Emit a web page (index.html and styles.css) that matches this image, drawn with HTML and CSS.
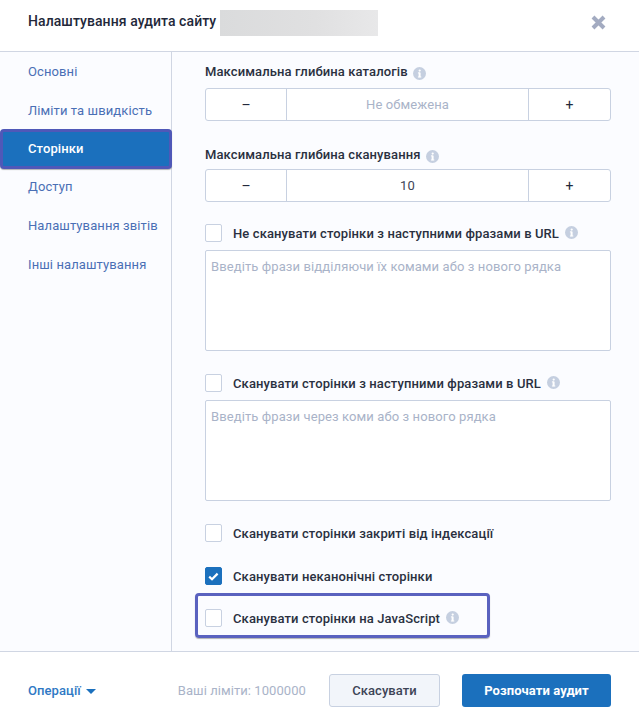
FILE: index.html
```html
<!DOCTYPE html>
<html lang="uk">
<head>
  <meta charset="UTF-8">
  <meta name="viewport" content="width=device-width, initial-scale=1.0">
  <title>Налаштування аудита сайту</title>
  <link rel="stylesheet" href="styles.css">
</head>
<body>
  <svg class="icon-defs" width="0" height="0">
    <symbol id="info" viewBox="0 0 13 13">
      <circle cx="6.5" cy="6.5" r="6.5" fill="#c5cfe0"/>
      <rect x="5.6" y="5.6" width="2" height="4.6" fill="#fff"/>
      <rect x="4.9" y="5.4" width="2" height="1" fill="#fff"/>
      <rect x="4.9" y="9.5" width="3.4" height="1" fill="#fff"/>
      <circle cx="6.7" cy="3.6" r="1.1" fill="#fff"/>
    </symbol>
  </svg>

  <div class="modal">
    <header class="modal-header">
      <h1 class="modal-title">Налаштування аудита сайту</h1>
      <div class="site-blur"></div>
      <svg class="close-icon" width="15" height="15" viewBox="0 0 15 15">
        <path d="M2 2 L13 13 M13 2 L2 13" stroke="#a3abc1" stroke-width="4" fill="none"/>
      </svg>
    </header>

    <div class="modal-body">
      <nav class="side-nav">
        <a class="nav-item">Основні</a>
        <a class="nav-item">Ліміти та швидкість</a>
        <a class="nav-item active">Сторінки</a>
        <a class="nav-item">Доступ</a>
        <a class="nav-item">Налаштування звітів</a>
        <a class="nav-item">Інші налаштування</a>
      </nav>

      <main class="settings">
        <div class="field-label first">Максимальна глибина каталогів <svg class="info"><use href="#info"/></svg></div>
        <div class="stepper">
          <div class="step-btn">–</div>
          <div class="step-value muted">Не обмежена</div>
          <div class="step-btn">+</div>
        </div>

        <div class="field-label second">Максимальна глибина сканування <svg class="info"><use href="#info"/></svg></div>
        <div class="stepper">
          <div class="step-btn">–</div>
          <div class="step-value">10</div>
          <div class="step-btn">+</div>
        </div>

        <label class="check-row url-row">
          <span class="checkbox"></span>
          <span>Не сканувати сторінки з наступними фразами в URL</span>
          <svg class="info"><use href="#info"/></svg>
        </label>
        <div class="phrase-box">Введіть фрази відділяючи їх комами або з нового рядка</div>

        <label class="check-row url-row second-url">
          <span class="checkbox"></span>
          <span>Сканувати сторінки з наступними фразами в URL</span>
          <svg class="info"><use href="#info"/></svg>
        </label>
        <div class="phrase-box">Введіть фрази через коми або з нового рядка</div>

        <label class="check-row closed-row">
          <span class="checkbox"></span>
          <span>Сканувати сторінки закриті від індексації</span>
        </label>

        <label class="check-row canon-row">
          <span class="checkbox checked">
            <svg width="11" height="9" viewBox="0 0 11 9"><path d="M1.2 4.6 L4 7.2 L9.6 1.6" stroke="#fff" stroke-width="2.2" fill="none"/></svg>
          </span>
          <span>Сканувати неканонічні сторінки</span>
        </label>

        <div class="highlight">
          <label class="check-row">
            <span class="checkbox"></span>
            <span>Сканувати сторінки на JavaScript</span>
            <svg class="info"><use href="#info"/></svg>
          </label>
        </div>
      </main>
    </div>

    <footer class="modal-footer">
      <a class="operations">Операції <span class="caret"></span></a>
      <span class="limits">Ваші ліміти: 1000000</span>
      <button class="btn btn-cancel">Скасувати</button>
      <button class="btn btn-start">Розпочати аудит</button>
    </footer>
  </div>
</body>
</html>
```

FILE: styles.css
```css
* {
  box-sizing: border-box;
}

html, body {
  margin: 0;
  padding: 0;
}

body {
  font-family: Roboto, "Liberation Sans", sans-serif;
  font-size: 13px;
  color: #2a3040;
  background-color: #fff;
}

.icon-defs {
  position: absolute;
}

.modal {
  width: 639px;
  height: 723px;
  display: flex;
  flex-direction: column;
  overflow: hidden;
}

/* Header */
.modal-header {
  height: 52px;
  flex: none;
  display: flex;
  align-items: center;
  padding: 0 33px 0 28px;
  border-bottom: 1px solid #d0d6e3;
  background-color: #fff;
}

.modal-title {
  margin: 0;
  font-size: 14px;
  font-weight: 500;
  line-height: 44px;
  height: 44px;
  margin-top: -9px;
  letter-spacing: 0.08px;
  color: #23283a;
}

.site-blur {
  width: 158px;
  height: 26px;
  margin-left: 4px;
  margin-top: -6px;
  background: linear-gradient(90deg, #dadbdc, #e0e0e1 60%, #e8e8e9);
}

.close-icon {
  margin-left: auto;
  margin-top: -6px;
}

/* Body */
.modal-body {
  height: 600px;
  flex: none;
  display: flex;
  background-color: #fbfcff;
  border-bottom: 1px solid #d0d6e3;
}

.side-nav {
  width: 172px;
  flex: none;
  border-right: 1px solid #d0d6e3;
  padding-top: 0.5px;
  display: flex;
  flex-direction: column;
}

.nav-item {
  display: flex;
  align-items: center;
  height: 38.6px;
  padding-left: 28px;
  font-size: 13px;
  letter-spacing: 0.1px;
  color: #4a6fb5;
}

.nav-item.active {
  height: 40px;
  margin: -1px -1px -1px 0;
  font-weight: 500;
  color: #fff;
  background-color: #1b70bd;
  border: 3px solid #4f58b8;
  border-radius: 4px;
  padding-left: 25px;
  box-shadow: 0 1px 1px rgba(0, 0, 0, 0.3);
}

.settings {
  flex: 1;
  min-width: 0;
  padding: 0 28px 0 33px;
}

.field-label {
  font-weight: 500;
  line-height: 16px;
  display: flex;
  align-items: center;
  gap: 5px;
  letter-spacing: 0.11px;
  white-space: nowrap;
}

.field-label .info {
  margin-top: 2px;
}

.field-label.first {
  margin-top: 12px;
  margin-bottom: 8px;
}

.field-label.second {
  margin-top: 26px;
  margin-bottom: 6px;
}

.info {
  width: 13px;
  height: 13px;
  flex: none;
}

.stepper {
  display: flex;
  height: 33px;
  background-color: #fff;
  border: 1px solid #c8d1e1;
  border-radius: 3px;
}

.step-btn {
  width: 81px;
  flex: none;
  display: flex;
  align-items: center;
  justify-content: center;
  font-size: 14px;
  color: #23283a;
}

.step-btn:first-child {
  width: 80px;
}

.step-value {
  flex: 1;
  display: flex;
  align-items: center;
  justify-content: center;
  border-left: 1px solid #c8d1e1;
  border-right: 1px solid #c8d1e1;
  letter-spacing: 0.1px;
  color: #3d4456;
}

.step-value.muted {
  color: #a9b3c8;
}

.check-row {
  display: flex;
  align-items: center;
  height: 18px;
  font-weight: 500;
  letter-spacing: 0.11px;
  white-space: nowrap;
}

.checkbox {
  width: 17px;
  height: 18px;
  flex: none;
  margin-right: 11px;
  display: flex;
  align-items: center;
  justify-content: center;
  background-color: #fff;
  border: 1px solid #c8d1e1;
  border-radius: 2px;
}

.checkbox.checked {
  background-color: #1b70bd;
  border-color: #1b70bd;
}

.check-row .info {
  margin-left: 6px;
  margin-top: -1px;
}

.url-row {
  margin-top: 22px;
  margin-bottom: 8px;
}

.url-row.second-url {
  margin-top: 23px;
}

.url-row .info {
  margin-top: -2px;
}

.phrase-box {
  height: 101px;
  padding: 8px 5px;
  line-height: 16px;
  letter-spacing: 0.1px;
  color: #a9b3c8;
  background-color: #fff;
  border: 1px solid #c8d1e1;
  border-radius: 2px;
}

.closed-row {
  margin-top: 23px;
}

.canon-row {
  margin-top: 25px;
}

/* annotation frame around the JavaScript option */
.highlight {
  width: 295px;
  height: 45px;
  margin: 8px 0 0 -10px;
  padding: 13px 0 0 7px;
  border: 3px solid #5a62bf;
  border-radius: 4px;
  box-shadow: 0 1px 1px rgba(0, 0, 0, 0.3);
}

/* Footer */
.modal-footer {
  flex: 1;
  display: flex;
  align-items: center;
  padding: 6px 28px 0;
  background-color: #fff;
}

.operations {
  font-weight: 500;
  color: #2f78c4;
  letter-spacing: 0.07px;
  display: flex;
  align-items: center;
  gap: 5px;
}

.caret {
  width: 0;
  height: 0;
  border-left: 5px solid transparent;
  border-right: 5px solid transparent;
  border-top: 5px solid #1b70bd;
  margin-top: 1px;
}

.limits {
  margin-left: 82px;
  color: #a9b3c8;
  letter-spacing: 0.07px;
}

.btn {
  height: 33px;
  font-family: inherit;
  font-size: 13px;
  font-weight: 500;
  border-radius: 3px;
  padding: 0;
  letter-spacing: 0.07px;
}

.btn-cancel {
  width: 111px;
  margin-left: 23px;
  color: #3d4456;
  background-color: #f2f5fa;
  border: 1px solid #c8d1e1;
}

.btn-start {
  width: 149px;
  margin-left: 22px;
  color: #fff;
  background-color: #1b70bd;
  border: none;
  font-weight: 700;
}
```
